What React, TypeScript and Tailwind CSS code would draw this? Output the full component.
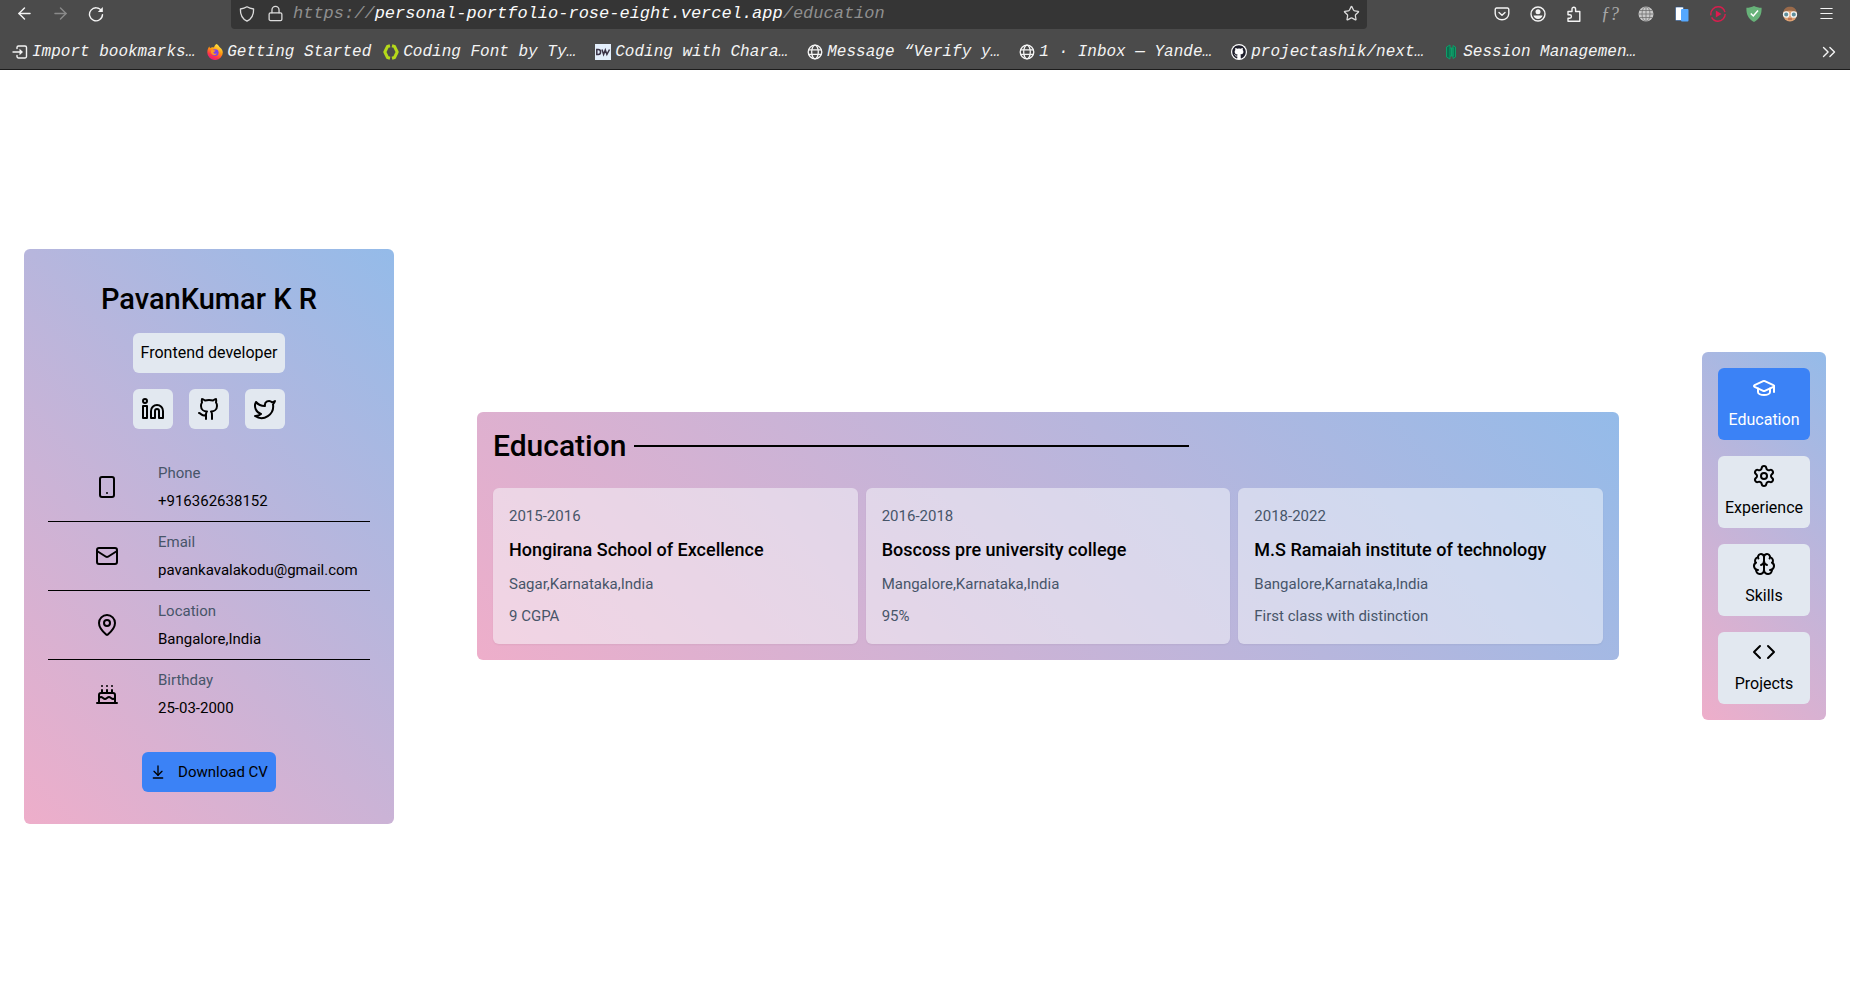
import type { ReactNode } from "react";
import {
  ArrowDownToLine,
  ArrowLeft,
  ArrowRight,
  Brain,
  Cake,
  ChevronsRight,
  Code,
  Github,
  GraduationCap,
  Linkedin,
  Lock,
  Mail,
  MapPin,
  Menu,
  Settings,
  Smartphone,
  Star,
  Twitter,
} from "lucide-react";
import { FaGithub } from "react-icons/fa";

const cardGradient = "bg-[linear-gradient(45deg,#eeaeca_0%,#94bbe9_100%)]";

/* ---------- Browser icons ---------- */

function ReloadIcon() {
  return (
    <svg viewBox="0 0 16 16" className="size-4" fill="none" stroke="currentColor" strokeWidth="1.4" strokeLinecap="round">
      <path d="M13.6 5A6.5 6.5 0 1 0 14.5 8.6" />
      <path d="M14.8 1v5h-5z" fill="currentColor" stroke="none" />
    </svg>
  );
}

function ShieldIcon() {
  return (
    <svg viewBox="0 0 16 16" className="size-4" fill="none" stroke="currentColor" strokeWidth="1.3" strokeLinejoin="round">
      <path d="M8 .8c2 1.3 4 1.9 6.600 2.200C14.800 8.500 12.500 13 8 15.200 3.500 13 1.200 8.500 1.400 3 4 2.700 6 2.100 8 .8z" />
    </svg>
  );
}

function GlobeIcon() {
  return (
    <svg viewBox="0 0 16 16" className="size-4 shrink-0" fill="none" stroke="currentColor" strokeWidth="1.3">
      <circle cx="8" cy="8" r="6.800" />
      <ellipse cx="8" cy="8" rx="3.300" ry="6.800" />
      <path d="M1.500 5.900h13M1.500 10.300h13" />
    </svg>
  );
}

function ImportIcon() {
  return (
    <svg viewBox="0 0 16 16" className="size-4 shrink-0" fill="none" stroke="currentColor" strokeWidth="1.400" strokeLinecap="round">
      <path d="M5 4.500V3.500A1.500 1.500 0 0 1 6.500 2h6.500A1.500 1.500 0 0 1 14.500 3.500v9a1.500 1.500 0 0 1-1.500 1.500H6.500A1.500 1.500 0 0 1 5 12.500v-1" />
      <path d="M1 8h7" />
      <path d="M7.500 4.800 11 8l-3.500 3.200z" fill="currentColor" stroke="none" />
    </svg>
  );
}

function FirefoxIcon() {
  return (
    <svg viewBox="0 0 16 16" className="size-4 shrink-0">
      <defs>
        <linearGradient id="flame" x1="0.8" y1="0" x2="0.3" y2="1">
          <stop offset="0" stopColor="#fff44f" />
          <stop offset="0.45" stopColor="#ff980e" />
          <stop offset="0.75" stopColor="#ff3647" />
          <stop offset="1" stopColor="#e31587" />
        </linearGradient>
      </defs>
      <path d="M9.500 0c2 1 2.500 2.500 3.500 3.500 1.700 1.300 2.800 3 2.800 5A7.700 7.500 0 0 1 .3 8.500C.3 6 1 4 2.300 2.500l.7 1.700C4.500 3 6 3.200 7 3.500 7.500 1.500 8.500.8 9.500 0z" fill="url(#flame)" />
      <circle cx="8.200" cy="8.600" r="3.400" fill="#7a3ff0" />
      <path d="M4 6.500c1.800-1 3.200-.2 4.600.3-.6 1-2 .9-2.200 1.900.6 1.300 2.400 1.200 3.600.6-1 2.300-4 2.500-5.400.5C4 8.800 3.800 7.500 4 6.500z" fill="#ff9a1f" />
    </svg>
  );
}

function TypeworksIcon() {
  return (
    <svg viewBox="0 0 16 16" className="size-4 shrink-0" fill="none" stroke="#b5d91a" strokeWidth="3" strokeLinejoin="round">
      <path d="M7 1.800 4.500 2.500 1.800 8l2.700 5.500 2.500.7M9 1.800l2.500.7L14.200 8l-2.700 5.500-2.500.7" />
    </svg>
  );
}

function DwIcon() {
  return (
    <svg viewBox="0 0 16 16" className="size-4 shrink-0">
      <rect width="16" height="16" fill="#e3eefb" />
      <path d="M1.800 5.500v5h1.500c3 0 3-5 0-5zM7 5.500l1.600 5L10.300 6l1.600 4.500 2.600-5" fill="none" stroke="#3a3246" strokeWidth="1.500" />
    </svg>
  );
}

function SessionIcon() {
  return (
    <svg viewBox="0 0 16 16" className="size-4 shrink-0" fill="none" stroke="#0f9d68" strokeWidth="1">
      <path d="M7 1v14l-3.500-2V3zM7 4h3v8H7M10 1.500 12.500 3v10L10 14.500z" fill="#0b6e4f" />
      <path d="M8.500 4v8" />
    </svg>
  );
}

function PocketIcon() {
  return (
    <svg viewBox="0 0 16 16" className="size-4" fill="none" stroke="currentColor" strokeWidth="1.400" strokeLinecap="round" strokeLinejoin="round">
      <path d="M2.500 2h11A1.500 1.500 0 0 1 14.800 3.500V7.500a6.800 6.300 0 0 1-13.600 0V3.500A1.500 1.500 0 0 1 2.500 2z" />
      <path d="m5 6.500 3 2.800 3-2.800" />
    </svg>
  );
}

function AccountIcon() {
  return (
    <svg viewBox="0 0 16 16" className="size-4">
      <circle cx="8" cy="8" r="7" fill="none" stroke="currentColor" strokeWidth="1.400" />
      <circle cx="8" cy="5.800" r="2.500" fill="currentColor" />
      <path d="M3.500 9.500h9c-.5 2.300-2.300 3.500-4.500 3.500S4 11.800 3.500 9.500z" fill="currentColor" />
    </svg>
  );
}

function ExtensionIcon() {
  return (
    <svg viewBox="0 0 16 16" className="size-4" fill="none" stroke="currentColor" strokeWidth="1.400" strokeLinejoin="round">
      <path d="M2 5.500h4V3a1.800 1.800 0 0 1 3.600 0v2.500h4.200v9.700H2v-3h1.700a1.700 1.700 0 0 0 0-3.500H2z" />
    </svg>
  );
}

function GridGlobeIcon() {
  return (
    <svg viewBox="0 0 16 16" className="size-4">
      <circle cx="8" cy="8" r="7.500" fill="#c9c9c9" />
      <g fill="none" stroke="#707070" strokeWidth="0.8">
        <ellipse cx="8" cy="8" rx="4" ry="7.500" />
        <path d="M8 .5v15M.5 8h15M1.500 4.500h13M1.500 11.500h13" />
      </g>
    </svg>
  );
}

function PagesIcon() {
  return (
    <svg viewBox="0 0 16 16" className="size-4">
      <rect x="1.500" y="1" width="8" height="13.500" rx="1" fill="#ffffff" stroke="#1e4f8f" strokeWidth="0.6" />
      <rect x="7" y="3" width="7.500" height="12.500" rx="1" fill="#55a8ff" />
    </svg>
  );
}

function PlayIcon() {
  return (
    <svg viewBox="0 0 16 16" className="size-4">
      <circle cx="8" cy="8" r="7.200" fill="none" stroke="#d81e4e" strokeWidth="1.400" strokeDasharray="19 2 22 2" />
      <path d="M5.800 4.500 11.500 8l-5.700 3.500z" fill="#e0194f" />
    </svg>
  );
}

function GreenShieldIcon() {
  return (
    <svg viewBox="0 0 16 16" className="size-4">
      <path d="M8 0c2.300 1.200 4.800 1.700 7.600 1.800C15.800 8 14 13 8 16 2 13 .2 8 .4 1.800 3.200 1.700 5.700 1.200 8 0z" fill="#67b279" />
      <path d="m4.800 7.500 2.500 2.500L12 4.500" fill="none" stroke="#fff" strokeWidth="1.500" />
    </svg>
  );
}

function FaceIcon() {
  return (
    <svg viewBox="0 0 16 16" className="size-4">
      <circle cx="8" cy="8.500" r="7" fill="#dfa274" />
      <path d="M1.500 6.500C2 2.500 4.500.8 8 .8s6 1.700 6.500 5.700c-4-2.300-9-2.300-13 0z" fill="#9a6a4a" />
      <g fill="#5f8f9c" stroke="#f2f2f2" strokeWidth="1.300">
        <circle cx="4.200" cy="8.500" r="2.700" />
        <circle cx="11.800" cy="8.500" r="2.700" />
      </g>
      <path d="M6 13h4" stroke="#a34a3a" />
    </svg>
  );
}

/* ---------- Browser chrome ---------- */

function ToolButton({ label, children, className = "" }: { label: string; children: ReactNode; className?: string }) {
  return (
    <button type="button" aria-label={label} className={`flex size-4 shrink-0 items-center justify-center ${className}`}>
      {children}
    </button>
  );
}

const bookmarks: { text: string; icon: ReactNode; wide?: boolean }[] = [
  { text: "Import bookmarks…", icon: <ImportIcon /> },
  { text: "Getting Started", icon: <FirefoxIcon /> },
  { text: "Coding Font by Ty…", icon: <TypeworksIcon />, wide: true },
  { text: "Coding with Chara…", icon: <DwIcon />, wide: true },
  { text: "Message “Verify y…", icon: <GlobeIcon />, wide: true },
  { text: "1 · Inbox — Yande…", icon: <GlobeIcon />, wide: true },
  {
    text: "projectashik/next…",
    icon: (
      <span className="flex size-4 shrink-0 items-center justify-center rounded-full bg-white text-[#1f1f2b]">
        <FaGithub size={14} />
      </span>
    ),
    wide: true,
  },
  { text: "Session Managemen…", icon: <SessionIcon />, wide: true },
];

function BrowserChrome() {
  return (
    <header className="border-b border-[#1c1c1c] bg-[#4b4b4b] font-['Liberation_Mono',monospace] text-[#f4f4f4]">
      <div className="flex h-[29px] items-stretch px-4">
        <div className="flex items-center gap-5 pb-0.5">
          <ToolButton label="Back"><ArrowLeft size={19} strokeWidth={1.8} className="shrink-0" /></ToolButton>
          <ToolButton label="Forward" className="text-[#8a8a8a]"><ArrowRight size={19} strokeWidth={1.8} className="shrink-0" /></ToolButton>
          <ToolButton label="Reload"><ReloadIcon /></ToolButton>
        </div>
        <div className="mx-[127px] flex min-w-0 flex-1 items-center rounded-b bg-[#353535] px-2 pb-0.5">
          <ToolButton label="Tracking protection" className="text-[#dcdcdc]"><ShieldIcon /></ToolButton>
          <ToolButton label="Connection secure" className="ml-3 text-[#dcdcdc]"><Lock size={17} strokeWidth={1.8} className="shrink-0" /></ToolButton>
          <div role="textbox" aria-label="Address" className="ml-2.5 flex-1 truncate text-[17px] leading-6 text-[#8f8f8f] italic">
            https://<span className="text-[#fbfbfb]">personal-portfolio-rose-eight.vercel.app</span>/education
          </div>
          <ToolButton label="Bookmark this page" className="text-[#dcdcdc]"><Star size={17} strokeWidth={1.8} className="shrink-0" /></ToolButton>
        </div>
        <div className="flex items-center gap-5 pb-0.5">
          <ToolButton label="Pocket"><PocketIcon /></ToolButton>
          <ToolButton label="Account"><AccountIcon /></ToolButton>
          <ToolButton label="Extensions"><ExtensionIcon /></ToolButton>
          <ToolButton label="Font finder" className="text-lg leading-4 text-[#a8a8a8] italic">
            <span className="font-['Liberation_Serif',serif]">ƒ?</span>
          </ToolButton>
          <ToolButton label="Proxy"><GridGlobeIcon /></ToolButton>
          <ToolButton label="Tabs"><PagesIcon /></ToolButton>
          <ToolButton label="Media"><PlayIcon /></ToolButton>
          <ToolButton label="Ad blocker"><GreenShieldIcon /></ToolButton>
          <ToolButton label="Profile"><FaceIcon /></ToolButton>
          <ToolButton label="Menu"><Menu size={17} strokeWidth={1.6} className="shrink-0" /></ToolButton>
        </div>
      </div>
      <nav aria-label="Bookmarks" className="flex h-10 items-center gap-3 pt-1.5 pr-2.5 pl-3">
        {bookmarks.map((b) => (
          <a
            key={b.text}
            href="#"
            className={`flex shrink-0 items-center gap-1 text-base whitespace-nowrap italic ${b.wide ? "w-[200px]" : ""}`}
          >
            {b.icon}
            {b.text}
          </a>
        ))}
        <button type="button" aria-label="More bookmarks" className="ml-auto">
          <ChevronsRight size={22} strokeWidth={1.5} />
        </button>
      </nav>
    </header>
  );
}

/* ---------- Portfolio page ---------- */

const socials = [
  { label: "LinkedIn", Icon: Linkedin },
  { label: "GitHub", Icon: Github },
  { label: "Twitter", Icon: Twitter },
];

const contacts = [
  { label: "Phone", value: "+916362638152", Icon: Smartphone },
  { label: "Email", value: "pavankavalakodu@gmail.com", Icon: Mail },
  { label: "Location", value: "Bangalore,India", Icon: MapPin },
  { label: "Birthday", value: "25-03-2000", Icon: Cake },
];

function ProfileCard() {
  return (
    <aside className={`flex w-[370px] shrink-0 flex-col items-center rounded-md px-6 py-8 ${cardGradient}`}>
      <h1 className="text-[29px] leading-9 font-medium">PavanKumar K R</h1>
      <p className="mt-4 rounded-md bg-[#e2e8f0] p-2">Frontend developer</p>
      <div className="mt-4 flex gap-4">
        {socials.map(({ label, Icon }) => (
          <a key={label} href="#" aria-label={label} className="rounded-md bg-[#e2e8f0] p-2">
            <Icon size={24} />
          </a>
        ))}
      </div>
      <dl className="mt-6 w-full divide-y divide-black">
        {contacts.map(({ label, value, Icon }) => (
          <div key={label} className="grid grid-cols-[102px_1fr] items-center p-2">
            <Icon size={24} className="justify-self-center" />
            <div className="flex flex-col gap-1 text-[15px] leading-6">
              <dt className="text-[#475569]">{label}</dt>
              <dd>{value}</dd>
            </div>
          </div>
        ))}
      </dl>
      <button type="button" className="mt-6 flex items-center gap-3 rounded-md bg-[#3b82f6] p-2 text-[15px] leading-6">
        <ArrowDownToLine size={16} />
        Download CV
      </button>
    </aside>
  );
}

const schools = [
  { years: "2015-2016", name: "Hongirana School of Excellence", place: "Sagar,Karnataka,India", score: "9 CGPA" },
  { years: "2016-2018", name: "Boscoss pre university college", place: "Mangalore,Karnataka,India", score: "95%" },
  { years: "2018-2022", name: "M.S Ramaiah institute of technology", place: "Bangalore,Karnataka,India", score: "First class with distinction" },
];

function EducationSection() {
  return (
    <main className={`flex-1 rounded-md p-4 ${cardGradient}`}>
      <div className="flex items-center gap-2">
        <h2 className="text-3xl font-medium">Education</h2>
        <div className="h-0.5 w-1/2 bg-black" />
      </div>
      <div className="mt-6 grid grid-cols-3 gap-2">
        {schools.map((s) => (
          <article key={s.years} className="flex flex-col gap-2 rounded-md bg-slate-50/50 p-4 text-[15px] leading-6 text-[#475569] shadow-xs">
            <p>{s.years}</p>
            <h3 className="text-lg font-medium text-black">{s.name}</h3>
            <p>{s.place}</p>
            <p>{s.score}</p>
          </article>
        ))}
      </div>
    </main>
  );
}

const sections = [
  { label: "Education", Icon: GraduationCap, active: true },
  { label: "Experience", Icon: Settings, active: false },
  { label: "Skills", Icon: Brain, active: false },
  { label: "Projects", Icon: Code, active: false },
];

function SectionNav() {
  return (
    <nav aria-label="Sections" className={`flex w-[124px] shrink-0 flex-col gap-4 rounded-md p-4 ${cardGradient}`}>
      {sections.map(({ label, Icon, active }) => (
        <a
          key={label}
          href="#"
          aria-current={active ? "page" : undefined}
          className={`flex flex-col items-center gap-2 rounded-md py-2 ${active ? "bg-[#3b82f6] text-white" : "bg-[#e2e8f0]"}`}
        >
          <Icon size={24} />
          {label}
        </a>
      ))}
    </nav>
  );
}

export default function App() {
  return (
    <div className="flex min-h-screen flex-col bg-white text-black">
      <BrowserChrome />
      <div className="flex flex-1 items-center gap-[83px] px-6 font-['Roboto',sans-serif] text-base">
        <ProfileCard />
        <EducationSection />
        <SectionNav />
      </div>
    </div>
  );
}
